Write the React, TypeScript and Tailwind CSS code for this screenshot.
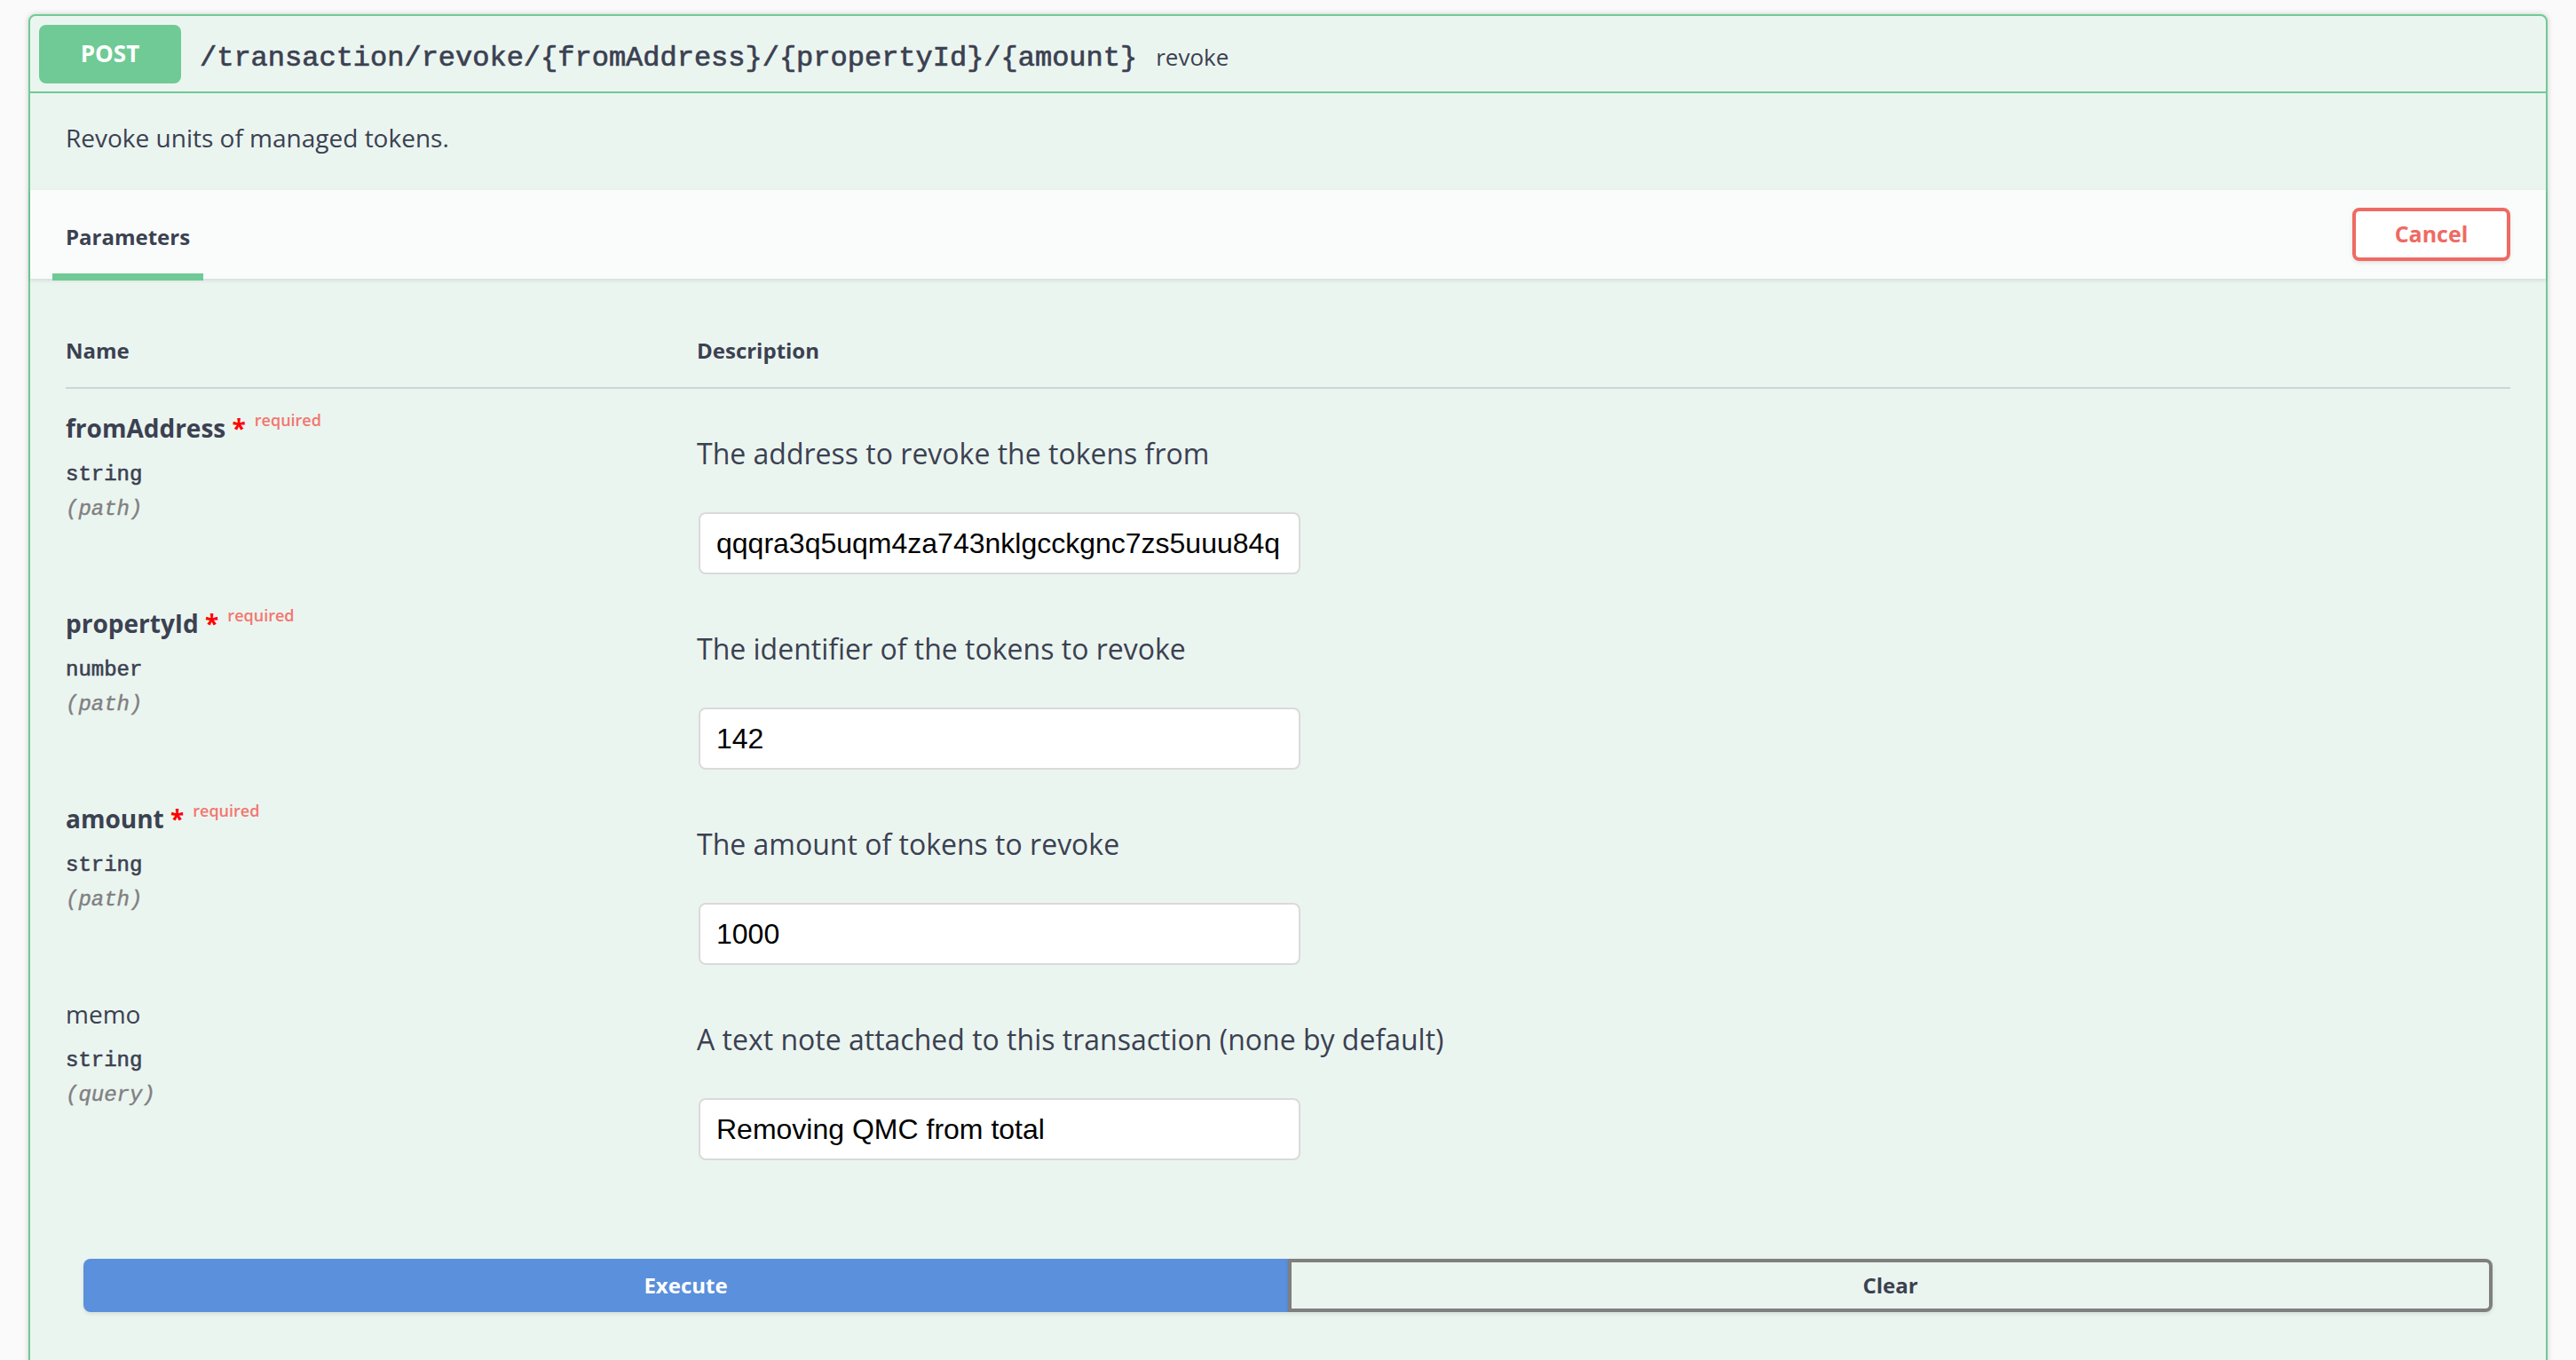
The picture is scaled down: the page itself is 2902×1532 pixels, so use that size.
import { FC } from 'react';

interface IParam {
  name: string;
  required: boolean;
  type: string;
  location: string;
  description: string;
  value: string;
}

const params: IParam[] = [
  {
    name: 'fromAddress',
    required: true,
    type: 'string',
    location: 'path',
    description: 'The address to revoke the tokens from',
    value: 'qqqra3q5uqm4za743nklgcckgnc7zs5uuu84qqz',
  },
  {
    name: 'propertyId',
    required: true,
    type: 'number',
    location: 'path',
    description: 'The identifier of the tokens to revoke',
    value: '142',
  },
  {
    name: 'amount',
    required: true,
    type: 'string',
    location: 'path',
    description: 'The amount of tokens to revoke',
    value: '1000',
  },
  {
    name: 'memo',
    required: false,
    type: 'string',
    location: 'query',
    description: 'A text note attached to this transaction (none by default)',
    value: 'Removing QMC from total',
  },
];

const ParamRow: FC<IParam> = ({ name, required, type, location, description, value }) => {
  return (
    <div className="flex">
      <div className="w-[711px] shrink-0 pt-[24px]">
        <div className="leading-[40px]">
          {required ? (
            <span className="text-[28px] font-bold">
              {name}
              <span className="text-[#ff0000]">&nbsp;*</span>
              <span className="pl-[10px] align-[13px] text-[18px] leading-none font-semibold text-[#f3766f]">
                required
              </span>
            </span>
          ) : (
            <span className="text-[28px]">{name}</span>
          )}
        </div>
        <div className="mt-[13px] font-['Liberation_Mono',monospace] text-[24px] leading-[30px] [-webkit-text-stroke:0.6px_#3b4151]">
          {type}
        </div>
        <div className="mt-[9px] font-['Liberation_Mono',monospace] text-[24px] leading-[30px] text-[#808080] italic [-webkit-text-stroke:0.4px_#808080]">
          ({location})
        </div>
      </div>
      <div className="pt-[49px] pb-[11px]">
        <p className="text-[32px] leading-[48px]">{description}</p>
        <input
          type="text"
          defaultValue={value}
          className="mt-[42px] ml-[2px] block h-[70px] w-[678px] rounded-[8px] border-2 border-[#dadada] bg-white pr-[20px] pl-[18px] font-['Liberation_Sans',Arial,sans-serif] text-[32px] text-black outline-none"
        />
      </div>
    </div>
  );
};

export default function App() {
  return (
    <div className="h-screen overflow-hidden bg-[#fafafa] px-[32px] pt-[16px] font-['Open_Sans',sans-serif] text-[#3b4151]">
      <div className="rounded-t-[8px] border-2 border-[#6fca95] bg-[#ebf5f0] shadow-[0_0_6px_rgba(0,0,0,0.19)]">
        {/* summary */}
        <div className="flex h-[87px] items-center border-b-2 border-[#6fca95] px-[10px]">
          <span className="flex h-[66px] w-[160px] items-center justify-center rounded-[8px] bg-[#6fca95] text-[26px] font-bold text-white">
            POST
          </span>
          <span className="ml-[21px] pt-[10px] font-['Liberation_Mono',monospace] text-[32px] [-webkit-text-stroke:0.7px_#3b4151]">
            /transaction/revoke/&#123;fromAddress&#125;/&#123;propertyId&#125;/&#123;amount&#125;
          </span>
          <span className="ml-[21px] pt-[7px] text-[26px]">revoke</span>
        </div>

        <div className="px-[40px] pt-[29px] pb-[38px]">
          <p className="text-[28px] leading-[42px]">Revoke units of managed tokens.</p>
        </div>

        {/* section header */}
        <div className="relative z-10 flex h-[100px] items-start justify-between bg-[#fafcfb] pr-[40px] pl-[25px] shadow-[0_2px_4px_rgba(0,0,0,0.1)]">
          <div className="flex flex-col items-center pt-[35px]">
            <h4 className="text-[24px] leading-[36px] font-bold">Parameters</h4>
            <div className="mt-[23px] h-[8px] w-[170px] bg-[#6fca95]" />
          </div>
          <button className="self-center h-[60px] w-[178px] rounded-[8px] border-4 border-[#ee6a63] bg-white text-[25px] font-bold text-[#ee6a63] shadow-[0_2px_4px_rgba(0,0,0,0.1)]">
            Cancel
          </button>
        </div>

        {/* parameters table */}
        <div className="px-[40px] pt-[39px] pb-[40px]">
          <div className="flex border-b-2 border-[#cfd4d6] pt-[24px] pb-[23px] text-[24px] leading-[36px] font-bold">
            <div className="w-[711px] shrink-0">Name</div>
            <div>Description</div>
          </div>
          {params.map((p) => (
            <ParamRow key={p.name} {...p} />
          ))}
        </div>

        <div className="grid grid-cols-2 px-[60px] pt-[60px] pb-[60px]">
          <button className="h-[60px] rounded-l-[8px] bg-[#5a90dc] text-[24px] font-bold text-white shadow-[0_2px_4px_rgba(0,0,0,0.1)]">
            Execute
          </button>
          <button className="h-[60px] rounded-r-[8px] border-4 border-[#7f7f7f] text-[24px] font-bold shadow-[0_2px_4px_rgba(0,0,0,0.1)]">
            Clear
          </button>
        </div>
      </div>
    </div>
  );
}
